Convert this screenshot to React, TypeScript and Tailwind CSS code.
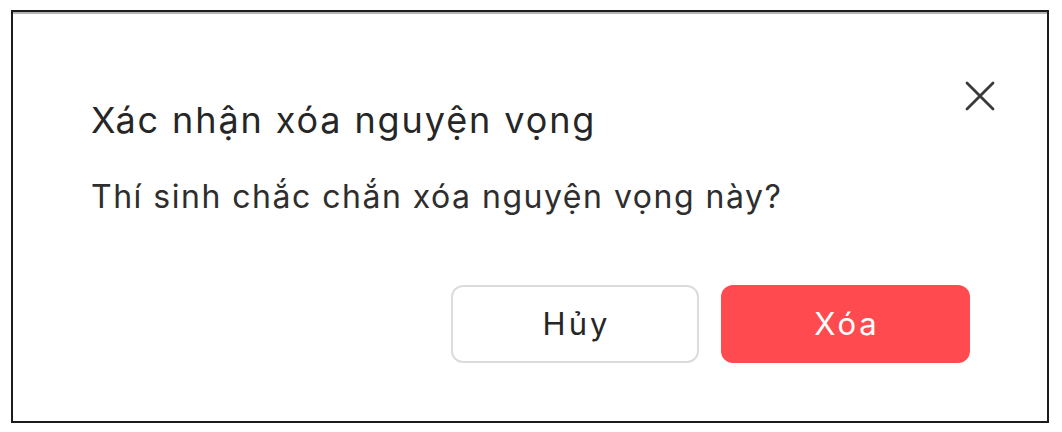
import React from "react";

export default function App() {
  return (
    <div className="w-[1062px] h-[432px] bg-white pl-[11px] pt-[10px]" style={{ fontFamily: "Inter, 'Noto Sans', sans-serif" }}>
      <div className="relative w-[1038px] h-[413px] border-2 border-[#1c1c1c] bg-white shadow-[inset_0_2px_0_#b5b5b5] flex flex-col">
        <button className="absolute left-[952px] top-[69px] w-[30px] h-[30px] flex items-center justify-center text-[#3a3a3a]">
          <svg width="30" height="30" viewBox="0 0 30 30" fill="none" stroke="currentColor" strokeWidth="2.8" strokeLinecap="round">
            <path d="M2 2 L28 28 M28 2 L2 28" />
          </svg>
        </button>
        <div className="pl-[78px] pr-[77px] pt-[83px] flex flex-col">
          <div className="text-[36px] leading-[50px] tracking-[1.9px] text-[#262626]">Xác nhận xóa nguyện vọng</div>
          <div className="mt-[28px] text-[32px] leading-[48px] tracking-[1.5px] text-[#2e2e2e]">Thí sinh chắc chắn xóa nguyện vọng này?</div>
          <div className="mt-[64px] flex justify-end gap-[22px]">
            <button className="w-[248px] h-[78px] pl-[3px] rounded-[12px] border-2 border-[#dcdcdc] bg-white text-[31px] tracking-[3px] text-[#262626]">Hủy</button>
            <button className="w-[249px] h-[78px] pl-[3px] rounded-[12px] bg-[#ff4b4f] text-[31px] tracking-[3px] text-white">Xóa</button>
          </div>
        </div>
      </div>
    </div>
  );
}
